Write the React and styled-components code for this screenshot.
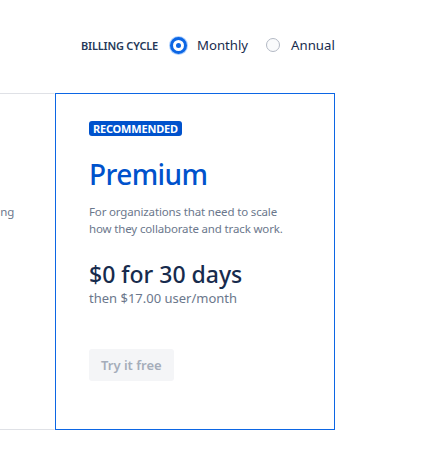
import React, { useState } from "react";
import styled, { createGlobalStyle } from "styled-components";

const GlobalStyle = createGlobalStyle`
  body {
    margin: 0;
    background: #ffffff;
    font-family: "Noto Sans", "Open Sans", sans-serif;
    color: #172b4d;
  }
`;

const Page = styled.div`
  width: 421px;
  height: 460px;
  overflow: hidden;
  padding-top: 33px;
  box-sizing: border-box;
`;

const Toolbar = styled.div`
  display: flex;
  align-items: center;
  margin-left: 81px;
  height: 24px;
`;

const Label = styled.span`
  font-size: 11px;
  font-weight: 600;
  color: #253858;
  letter-spacing: -0.2px;
  margin-right: 12px;
`;

const Option = styled.label`
  display: flex;
  align-items: center;
  gap: 10px;
  font-size: 13.2px;
  color: #172b4d;
  margin-right: 17px;
  cursor: pointer;
`;

const Radio = styled.span`
  position: relative;
  flex: none;
  box-sizing: border-box;
  width: ${(p) => (p.$checked ? "17px" : "14px")};
  height: ${(p) => (p.$checked ? "17px" : "14px")};
  margin: ${(p) => (p.$checked ? "0" : "0 1px")};
  border-radius: 50%;
  background: ${(p) => (p.$checked ? "#ffffff" : "#fafbfc")};
  border: ${(p) => (p.$checked ? "3px solid #0c66e4" : "1px solid #b3b9c4")};
  box-shadow: ${(p) => (p.$checked ? "0 0 0 1px rgba(76, 154, 255, 0.45)" : "none")};

  &::after {
    content: "";
    display: ${(p) => (p.$checked ? "block" : "none")};
    position: absolute;
    left: 50%;
    top: 50%;
    width: 5px;
    height: 5px;
    margin: -2.5px 0 0 -2.5px;
    border-radius: 50%;
    background: #0c66e4;
  }
`;

const Cards = styled.div`
  display: flex;
  margin-top: 36px;
  margin-left: -225px;
`;

const Card = styled.div`
  flex: none;
  width: 280px;
  height: 337px;
  box-sizing: border-box;
  padding: 22px 32px 0 33px;
  border: 1px solid ${(p) => (p.$featured ? "#0c66e4" : "#dfe1e6")};
  border-right-color: ${(p) => (p.$featured ? "#0c66e4" : "transparent")};
`;

const Badge = styled.span`
  display: inline-block;
  height: 15px;
  line-height: 15px;
  padding: 0 4px;
  border-radius: 3px;
  background: #0052cc;
  color: #fff;
  font-size: 11px;
  font-weight: 700;
  letter-spacing: -0.2px;
`;

const BadgeSlot = styled.div`
  height: 15px;
`;

const Title = styled.h2`
  margin: 25px 0 0;
  font-size: 28px;
  line-height: 36px;
  font-weight: 500;
  letter-spacing: -0.6px;
  color: #0052cc;
`;

const Description = styled.p`
  margin: 11px 0 0;
  font-size: 11.5px;
  line-height: 17px;
  letter-spacing: -0.15px;
  color: #6b778c;
  white-space: nowrap;
`;

const Price = styled.div`
  margin-top: 22px;
  font-size: 23px;
  line-height: 31px;
  font-weight: 500;
  color: #172b4d;
`;

const PriceNote = styled.div`
  margin-top: -1px;
  font-size: 13px;
  line-height: 18px;
  color: #6b778c;
`;

const Button = styled.button`
  margin-top: 42px;
  height: 32px;
  padding: 0 12px;
  border: none;
  border-radius: 3px;
  background: #f4f5f7;
  color: #a5adba;
  font-family: inherit;
  font-size: 13px;
  font-weight: 600;
`;

const plans = [
  {
    name: "Standard",
    desc: ["For growing teams with better tracking", "and more control."],
    price: "$7.75",
    note: "user/month",
  },
  {
    name: "Premium",
    featured: true,
    desc: ["For organizations that need to scale", "how they collaborate and track work."],
    price: "$0 for 30 days",
    note: "then $17.00 user/month",
  },
];

export default function App() {
  const [cycle, setCycle] = useState("monthly");

  return (
    <Page>
      <GlobalStyle />
      <Toolbar>
        <Label>BILLING CYCLE</Label>
        <Option onClick={() => setCycle("monthly")}>
          <Radio $checked={cycle === "monthly"} />
          Monthly
        </Option>
        <Option onClick={() => setCycle("annual")}>
          <Radio $checked={cycle === "annual"} />
          Annual
        </Option>
      </Toolbar>

      <Cards>
        {plans.map((plan) => (
          <Card key={plan.name} $featured={plan.featured}>
            <BadgeSlot>{plan.featured && <Badge>RECOMMENDED</Badge>}</BadgeSlot>
            <Title>{plan.name}</Title>
            <Description>
              {plan.desc[0]}
              <br />
              {plan.desc[1]}
            </Description>
            {plan.featured && (
              <>
                <Price>{plan.price}</Price>
                <PriceNote>{plan.note}</PriceNote>
                <Button>Try it free</Button>
              </>
            )}
          </Card>
        ))}
      </Cards>
    </Page>
  );
}
